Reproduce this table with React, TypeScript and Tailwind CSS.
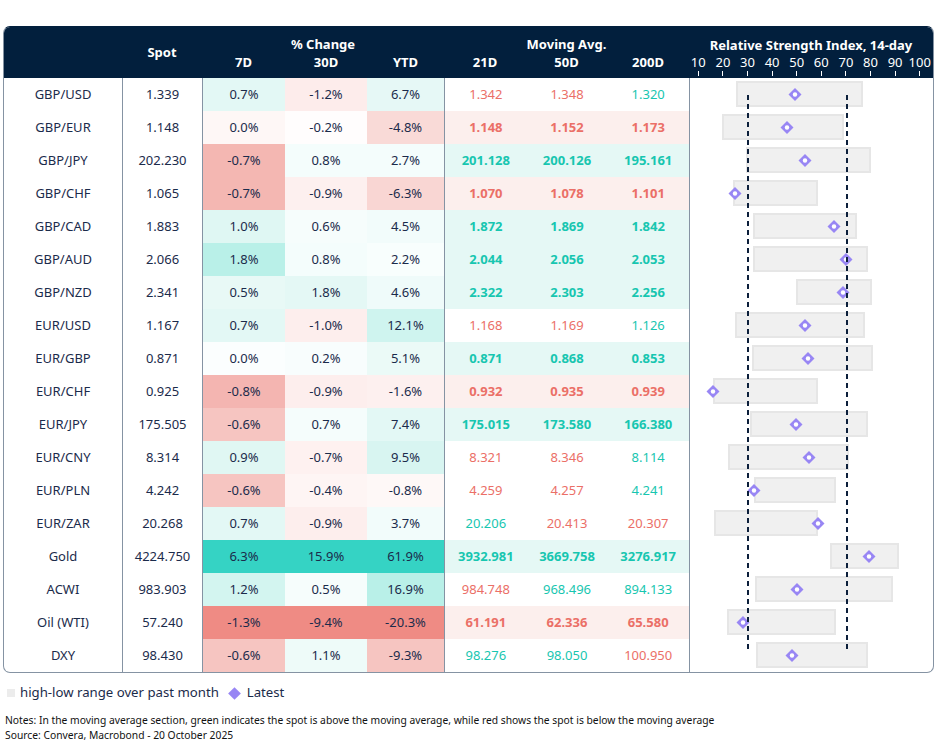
import React from "react";

type Row = {
  n: string;
  s: string;
  c: [string, string][];
  ma: string[];
  mc: string;
  bold: boolean;
  bar: [number, number, number];
};

const G5 = "bg-[#35d3c4]";
const rows: Row[] = [
  { n: "GBP/USD", s: "1.339", c: [["0.7%", "bg-[#e3f8f5]"], ["-1.2%", "bg-[#fdeceb]"], ["6.7%", "bg-[#e6f8f6]"]], ma: ["1.342", "1.348", "1.320"], mc: "rrg", bold: false, bar: [736, 863, 795] },
  { n: "GBP/EUR", s: "1.148", c: [["0.0%", "bg-[#fef7f6]"], ["-0.2%", "bg-[#fffdfd]"], ["-4.8%", "bg-[#f9dad7]"]], ma: ["1.148", "1.152", "1.173"], mc: "rrr", bold: true, bar: [722, 844, 787] },
  { n: "GBP/JPY", s: "202.230", c: [["-0.7%", "bg-[#f4b7b2]"], ["0.8%", "bg-[#f4fdfc]"], ["2.7%", "bg-[#f4fdfc]"]], ma: ["201.128", "200.126", "195.161"], mc: "ggg", bold: true, bar: [746, 871, 805] },
  { n: "GBP/CHF", s: "1.065", c: [["-0.7%", "bg-[#f4b7b2]"], ["-0.9%", "bg-[#fdf0ef]"], ["-6.3%", "bg-[#f9d6d3]"]], ma: ["1.070", "1.078", "1.101"], mc: "rrr", bold: true, bar: [733, 818, 735] },
  { n: "GBP/CAD", s: "1.883", c: [["1.0%", "bg-[#dff7f3]"], ["0.6%", "bg-[#f6fdfc]"], ["4.5%", "bg-[#f2fcfb]"]], ma: ["1.872", "1.869", "1.842"], mc: "ggg", bold: true, bar: [753, 857, 834] },
  { n: "GBP/AUD", s: "2.066", c: [["1.8%", "bg-[#b9f0e8]"], ["0.8%", "bg-[#f4fdfc]"], ["2.2%", "bg-[#f8fefd]"]], ma: ["2.044", "2.056", "2.053"], mc: "ggg", bold: true, bar: [753, 868, 846] },
  { n: "GBP/NZD", s: "2.341", c: [["0.5%", "bg-[#e8f9f6]"], ["1.8%", "bg-[#e4f8f5]"], ["4.6%", "bg-[#effbfa]"]], ma: ["2.322", "2.303", "2.256"], mc: "ggg", bold: true, bar: [796, 872, 843] },
  { n: "EUR/USD", s: "1.167", c: [["0.7%", "bg-[#e3f8f5]"], ["-1.0%", "bg-[#fdeeed]"], ["12.1%", "bg-[#cff4ef]"]], ma: ["1.168", "1.169", "1.126"], mc: "rrg", bold: false, bar: [735, 865, 805] },
  { n: "EUR/GBP", s: "0.871", c: [["0.0%", "bg-[#fbfefe]"], ["0.2%", "bg-[#f8fdfd]"], ["5.1%", "bg-[#ebfaf7]"]], ma: ["0.871", "0.868", "0.853"], mc: "ggg", bold: true, bar: [752, 873, 808] },
  { n: "EUR/CHF", s: "0.925", c: [["-0.8%", "bg-[#f4b5b1]"], ["-0.9%", "bg-[#fdeeed]"], ["-1.6%", "bg-[#fdf0ef]"]], ma: ["0.932", "0.935", "0.939"], mc: "rrr", bold: true, bar: [713, 818, 713] },
  { n: "EUR/JPY", s: "175.505", c: [["-0.6%", "bg-[#f6c5c1]"], ["0.7%", "bg-[#f5fdfc]"], ["7.4%", "bg-[#e3f8f5]"]], ma: ["175.015", "173.580", "166.380"], mc: "ggg", bold: true, bar: [750, 868, 796] },
  { n: "EUR/CNY", s: "8.314", c: [["0.9%", "bg-[#e0f7f3]"], ["-0.7%", "bg-[#fef1f0]"], ["9.5%", "bg-[#d8f5f1]"]], ma: ["8.321", "8.346", "8.114"], mc: "rrg", bold: false, bar: [728, 849, 809] },
  { n: "EUR/PLN", s: "4.242", c: [["-0.6%", "bg-[#f6c5c1]"], ["-0.4%", "bg-[#fef5f4]"], ["-0.8%", "bg-[#fef8f7]"]], ma: ["4.259", "4.257", "4.241"], mc: "rrg", bold: false, bar: [754, 836, 754] },
  { n: "EUR/ZAR", s: "20.268", c: [["0.7%", "bg-[#e3f8f5]"], ["-0.9%", "bg-[#fdeeed]"], ["3.7%", "bg-[#f2fcfb]"]], ma: ["20.206", "20.413", "20.307"], mc: "grr", bold: false, bar: [714, 818, 818] },
  { n: "Gold", s: "4224.750", c: [["6.3%", G5], ["15.9%", G5], ["61.9%", G5]], ma: ["3932.981", "3669.758", "3276.917"], mc: "ggg", bold: true, bar: [830, 899, 869] },
  { n: "ACWI", s: "983.903", c: [["1.2%", "bg-[#d3f5f0]"], ["0.5%", "bg-[#f6fdfc]"], ["16.9%", "bg-[#b9f0e8]"]], ma: ["984.748", "968.496", "894.133"], mc: "rgg", bold: false, bar: [755, 893, 797] },
  { n: "Oil (WTI)", s: "57.240", c: [["-1.3%", "bg-[#ef8b84]"], ["-9.4%", "bg-[#ef8b84]"], ["-20.3%", "bg-[#ef8b84]"]], ma: ["61.191", "62.336", "65.580"], mc: "rrr", bold: true, bar: [727, 836, 743] },
  { n: "DXY", s: "98.430", c: [["-0.6%", "bg-[#f6c5c1]"], ["1.1%", "bg-[#eefbf9]"], ["-9.3%", "bg-[#f6c5c1]"]], ma: ["98.276", "98.050", "100.950"], mc: "ggr", bold: false, bar: [756, 868, 792] },
];

const ROW_H = 33;
const RSI_X0 = 690;

function RsiChart() {
  const h = rows.length * ROW_H;
  return (
    <svg width={244} height={h} viewBox={`0 0 244 ${h}`} className="block">
      {rows.map((r, i) => {
        const y = i * ROW_H + 3;
        return (
          <rect
            key={"b" + i}
            x={r.bar[0] - RSI_X0 + 1}
            y={y + 1}
            width={r.bar[1] - r.bar[0] - 2}
            height={24}
            fill="#f0f0f0"
            stroke="#e6e6e6"
            strokeWidth={2}
          />
        );
      })}
      {rows.map((r, i) => {
        const cx = r.bar[2] - RSI_X0;
        const cy = i * ROW_H + 16.5;
        const d = 6.5;
        return (
          <g key={"d" + i}>
            <polygon
              points={`${cx},${cy - d} ${cx + d},${cy} ${cx},${cy + d} ${cx - d},${cy}`}
              fill="#9886f4"
            />
            <circle cx={cx} cy={cy} r={2.2} fill="#ffffff" />
          </g>
        );
      })}
      <line x1={58} y1={17} x2={58} y2={574} stroke="#0c1f3b" strokeWidth={2} strokeDasharray="5 4" />
      <line x1={157} y1={17} x2={157} y2={574} stroke="#0c1f3b" strokeWidth={2} strokeDasharray="5 4" />
    </svg>
  );
}

export default function App() {
  const axis = [10, 20, 30, 40, 50, 60, 70, 80, 90, 100];
  return (
    <div className="w-[937px] h-[745px] bg-white pt-[26px] px-[3px] font-['Noto_Sans',sans-serif] text-[#1b2b4b]">
      <div className="w-[931px] rounded-[7px] border border-[#8593a3] border-t-[#021f3d] overflow-hidden">
        {/* Header */}
        <div className="flex bg-[#021f3d] text-white font-bold text-[13px] leading-[18px] h-[52px] -mt-px">
          <div className="w-[118px]" />
          <div className="w-[80px] flex items-center justify-center">Spot</div>
          <div className="w-[242px] flex flex-col">
            <div className="h-[27px] flex items-end justify-center">% Change</div>
            <div className="flex h-[25px]">
              <div className="w-[83px] text-center">7D</div>
              <div className="w-[82px] text-center">30D</div>
              <div className="w-[77px] text-center">YTD</div>
            </div>
          </div>
          <div className="w-[245px] flex flex-col">
            <div className="h-[27px] flex items-end justify-center">Moving Avg.</div>
            <div className="flex h-[25px]">
              <div className="w-[82px] text-center">21D</div>
              <div className="w-[81px] text-center">50D</div>
              <div className="w-[82px] text-center">200D</div>
            </div>
          </div>
          <div className="w-[244px] flex flex-col">
            <div className="h-[28px] flex items-end justify-center">Relative Strength Index, 14-day</div>
            <div className="-ml-[3px] w-[246px] grid grid-cols-10 font-normal text-[13px] leading-[16px]">
              {axis.map((a) => (
                <div key={a} className="flex flex-col items-center">
                  <span>{a}</span>
                  <span className="mt-[1px] w-px h-[5px] bg-white" />
                </div>
              ))}
            </div>
          </div>
        </div>
        {/* Body */}
        <div className="flex text-[13px]">
          <div className="flex flex-col">
            {rows.map((r) => (
              <div key={r.n} className="flex h-[33px]">
                <div className="w-[118px] flex items-center justify-center">{r.n}</div>
                <div className="w-[80px] border-l border-[#8593a3] flex items-center justify-center">{r.s}</div>
                <div className={`w-[83px] border-l border-[#8593a3] flex items-center justify-center ${r.c[0][1]}`}>{r.c[0][0]}</div>
                <div className={`w-[82px] flex items-center justify-center ${r.c[1][1]}`}>{r.c[1][0]}</div>
                <div className={`w-[77px] flex items-center justify-center ${r.c[2][1]}`}>{r.c[2][0]}</div>
                <div
                  className={`w-[245px] border-l border-[#8593a3] flex ${
                    r.bold ? (r.mc[0] === "g" ? "bg-[#e5f8f5] font-bold" : "bg-[#fcefed] font-bold") : ""
                  }`}
                >
                  {r.ma.map((m, j) => (
                    <div
                      key={j}
                      className={`${j === 1 ? "w-[81px]" : "w-[82px]"} flex items-center justify-center ${
                        r.mc[j] === "g" ? "text-[#17c6b0]" : "text-[#eb6f67]"
                      }`}
                    >
                      {m}
                    </div>
                  ))}
                </div>
              </div>
            ))}
          </div>
          <div className="w-[245px] border-l border-[#8593a3]">
            <RsiChart />
          </div>
        </div>
      </div>
      {/* Legend */}
      <div className="mt-[12px] ml-[4px] flex items-center h-[16px] text-[13.2px] text-[#1b2b4b]">
        <span className="w-[8px] h-[8px] bg-[#ececec] inline-block" />
        <span className="ml-[5px]">high-low range over past month</span>
        <span className="ml-[11px] w-[9px] h-[9px] bg-[#9886f4] rotate-45 inline-block" />
        <span className="ml-[8px]">Latest</span>
      </div>
      {/* Notes */}
      <div className="mt-[12px] ml-[2px] text-[10.3px] leading-[15px] text-[#111111]">
        <div>
          Notes: In the moving average section, green indicates the spot is above the moving average, while red shows the spot is below the moving average
        </div>
        <div>Source: Convera, Macrobond - 20 October 2025</div>
      </div>
    </div>
  );
}
